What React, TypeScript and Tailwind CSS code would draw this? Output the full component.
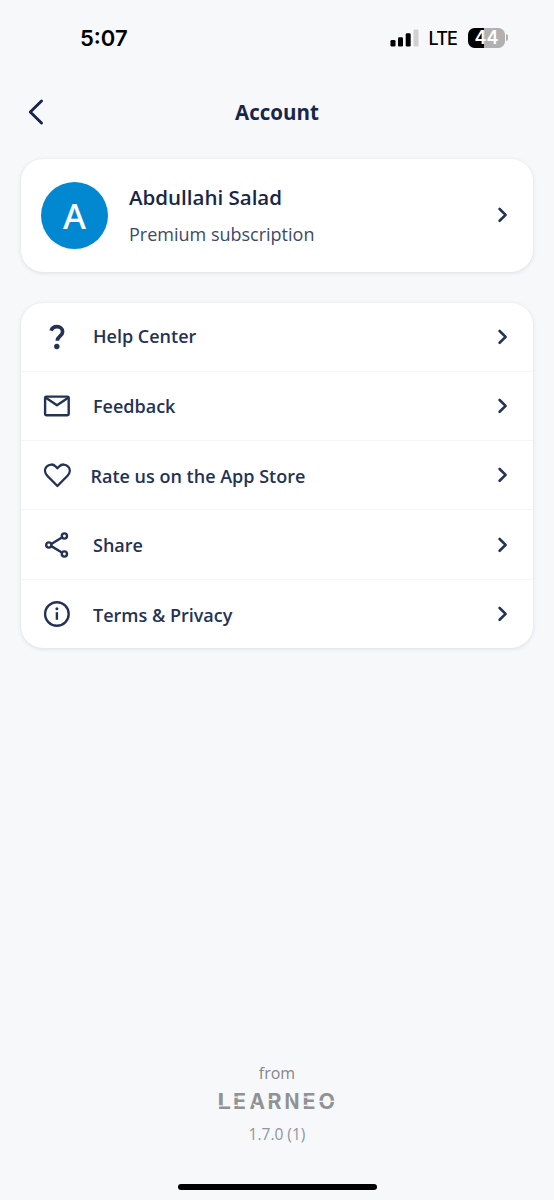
import type { ReactNode } from "react";

type MenuItem = {
  label: string;
  icon: ReactNode;
  labelClass?: string;
};

const menuItems: MenuItem[] = [
  {
    label: "Help Center",
    icon: (
      <>
        <path d="M8.2 7.8C8.900 5 11.200 3.700 14 3.700c3.300 0 5.600 1.900 5.600 5 0 4.400-5.300 4.500-5.300 9" strokeWidth="3.7" strokeLinecap="butt" />
        <circle cx="13.8" cy="23.5" r="2.7" fill="currentColor" stroke="none" />
      </>
    ),
  },
  {
    label: "Feedback",
    icon: (
      <>
        <rect x="2.1" y="4.6" width="23.6" height="18.6" rx="1.2" />
        <path d="M2.8 5.8 14 13.2l11.2-7.4" />
      </>
    ),
    labelClass: "relative top-[0.5px]",
  },
  {
    label: "Rate us on the App Store",
    icon: (
      <path d="M14.4 25 4.5 15C1.6 12 1.3 8.2 3.5 5.7 6 2.9 10.2 2.9 12.7 5.5l1.7 1.8 1.7-1.8c2.5-2.6 6.7-2.6 9.2.2 2.2 2.5 1.9 6.3-1 9.3z" />
    ),
    labelClass: "relative top-px -ml-[2.5px]",
  },
  {
    label: "Share",
    icon: (
      <>
        <path d="m8.7 12.7 10.2-6.2M8.7 15.4l10.2 6.1" />
        <circle cx="5.8" cy="14" r="2.6" />
        <circle cx="21.4" cy="5" r="2.6" />
        <circle cx="21.4" cy="23" r="2.6" />
      </>
    ),
    labelClass: "relative top-px",
  },
  {
    label: "Terms & Privacy",
    icon: (
      <>
        <circle cx="13.9" cy="14" r="11.8" />
        <path d="M13.9 12.2v7.6" strokeLinecap="butt" />
        <circle cx="13.9" cy="8.7" r="1.5" fill="currentColor" stroke="none" />
      </>
    ),
    labelClass: "relative top-[1.5px]",
  },
];

function Chevron() {
  return (
    <svg className="h-4 w-3 shrink-0" viewBox="0 0 12 16" fill="none" stroke="currentColor" strokeWidth="2.6" strokeLinecap="round" strokeLinejoin="round">
      <path d="m2.6 2 6 5.9-6 5.9" />
    </svg>
  );
}

function StatusBar() {
  return (
    <div className="flex h-[75px] items-center justify-between pl-20 pr-[46px] text-black">
      <span className="pt-px font-['Inter',sans-serif] text-[22px] font-semibold leading-none">5:07</span>
      <div className="flex items-center">
        <svg className="h-[18px] w-[29px]" viewBox="0 0 29 18">
          <rect x="0.5" y="11" width="5" height="6.5" rx="1.3" />
          <rect x="8" y="8.2" width="5" height="9.3" rx="1.3" />
          <rect x="15.7" y="4.3" width="5" height="13.2" rx="1.3" />
          <rect x="23.5" y="0.5" width="5" height="17" rx="1.3" fill="#cfcfd0" />
        </svg>
        <span className="ml-[10px] pt-[2px] font-['Inter',sans-serif] text-[18px] font-medium leading-none tracking-[-0.9px]">LTE</span>
        <div className="ml-[11px] flex h-5 w-[37px] items-center justify-center rounded-[6.5px] bg-[linear-gradient(90deg,#000_16px,#b1b1b2_16px)] font-['Inter',sans-serif] text-[18px] font-semibold leading-none text-white">
          44
        </div>
        <div className="ml-px h-[7px] w-[2px] rounded-r-full bg-[#b1b1b2]" />
      </div>
    </div>
  );
}

const wordmarkLetters = [
  { char: "L", x: 4.5, width: 13.5 },
  { char: "E", x: 20, width: 13 },
  { char: "A", x: 36.5, width: 15.5 },
  { char: "R", x: 54.5, width: 14 },
  { char: "N", x: 71.5, width: 15 },
  { char: "E", x: 89.5, width: 13 },
  { char: "O", x: 105.5, width: 16.5 },
];

// Stencil wordmark: plain letters with thin slits cut over them
function Wordmark() {
  return (
    <svg className="h-[32px] w-[128px] overflow-visible" viewBox="0 0 128 32">
      <g fill="#919295" fontFamily="Inter, sans-serif" fontSize="21" fontWeight="700">
        {wordmarkLetters.map(({ char, x, width }) => (
          <text key={x} x={x} y="23" textLength={width} lengthAdjust="spacingAndGlyphs">
            {char}
          </text>
        ))}
      </g>
      <path
        d="M5 19.8h4.5M21 11.2h3.5M21 19.3h3.5M40 18l6 2.5M55.5 13.5h3.5M76.5 10.5v12.5M90.5 11.2h3.5M90.5 19.3h3.5M106 15.3h4.5M117.5 15.3h4.5"
        stroke="#f7f8fa"
        strokeWidth="1.2"
      />
    </svg>
  );
}

export default function App() {
  return (
    <div className="flex h-[1200px] w-[554px] flex-col bg-[#f7f8fa] font-['Open_Sans',sans-serif] text-[#243255]">
      <StatusBar />

      <header className="grid h-[74px] grid-cols-[1fr_auto_1fr] items-center px-[27px]">
        <svg className="h-7 w-5" viewBox="0 0 20 28" fill="none" stroke="#162549" strokeWidth="2.9" strokeLinecap="round" strokeLinejoin="round">
          <path d="M14.5 3 3.3 14l11.2 11" />
        </svg>
        <h1 className="text-[20.5px] font-bold text-[#182649]">Account</h1>
      </header>

      <main className="mt-[9.5px] flex flex-1 flex-col px-[21px]">
        <section className="flex h-[113px] items-center rounded-[22px] bg-white pl-5 pr-[24px] shadow-[0_1px_4px_rgba(20,35,74,0.12)]">
          <div className="flex size-[67px] items-center justify-center rounded-full bg-[#0288d1] font-['Noto_Sans',sans-serif] text-[35px] font-medium leading-none text-white">
            A
          </div>
          <div className="ml-[21px] flex-1 pt-[2px]">
            <h2 className="text-[20.5px] font-semibold leading-[37px] text-[#182649]">Abdullahi Salad</h2>
            <p className="text-[18px] leading-[37px] text-[#3b4969]">Premium subscription</p>
          </div>
          <Chevron />
        </section>

        <section className="mt-[31px] divide-y divide-[#f5f5f7] rounded-[22px] bg-white shadow-[0_1px_4px_rgba(20,35,74,0.12)]">
          {menuItems.map((item) => (
            <div key={item.label} className="flex h-[69.3px] items-center pl-[22px] pr-[24px] last:h-[68.5px]">
              <svg className="size-7 shrink-0" viewBox="0 0 28 28" fill="none" stroke="currentColor" strokeWidth="2.4" strokeLinecap="round" strokeLinejoin="round">
                {item.icon}
              </svg>
              <div className="ml-[22px] flex-1 text-[18px] font-semibold">
                <span className={item.labelClass}>{item.label}</span>
              </div>
              <Chevron />
            </div>
          ))}
        </section>

        <footer className="mt-auto flex flex-col items-center">
          <span className="text-[16px] leading-5 text-[#85868a]">from</span>
          <div className="mt-[3px]">
            <Wordmark />
          </div>
          <span className="mt-[6px] text-[15.5px] leading-5 text-[#9095a3]">1.7.0 (1)</span>
        </footer>
      </main>

      <div className="mx-auto mb-[10.5px] mt-[40px] h-[6px] w-[199px] rounded-full bg-black" />
    </div>
  );
}
